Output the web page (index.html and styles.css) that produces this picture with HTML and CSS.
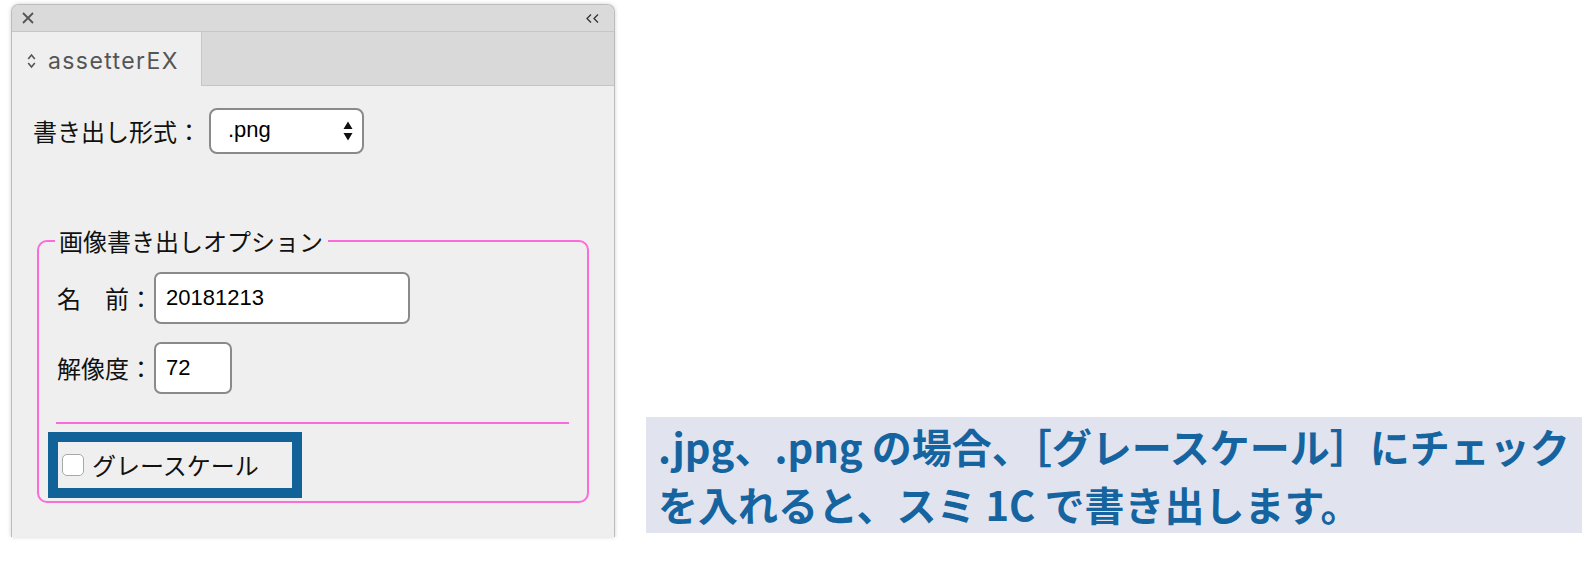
FILE: index.html
```html
<!DOCTYPE html>
<html lang="ja">
<head>
<meta charset="utf-8">
<title>assetterEX</title>
<link rel="stylesheet" href="styles.css">
</head>
<body>
<div class="page">
  <div class="panel">
    <div class="titlebar">
      <svg class="ico-close" width="12" height="12" viewBox="0 0 12 12"><path d="M1 1 L11 11 M11 1 L1 11" stroke="#555" stroke-width="1.8" fill="none"/></svg>
      <svg class="ico-collapse" width="14" height="9" viewBox="0 0 14 9"><path d="M5 0.5 L1 4.5 L5 8.5 M12 0.5 L8 4.5 L12 8.5" stroke="#333" stroke-width="1.3" fill="none"/></svg>
    </div>
    <div class="tabs">
      <div class="tab">
        <svg class="ico-updown" width="9" height="16" viewBox="0 0 9 16"><path d="M1.2 6 L4.5 2 L7.8 6 M1.2 10 L4.5 14 L7.8 10" stroke="#555" stroke-width="1.6" fill="none"/></svg>
        <span class="tab-label">assetterEX</span>
      </div>
      <div class="tab-fill"></div>
    </div>
    <div class="body">
      <div class="format-row">
        <span class="label">書き出し形式：</span>
        <div class="select">
          <span class="select-value">.png</span>
          <svg class="select-arrows" width="10" height="20" viewBox="0 0 10 20"><path d="M0.5 8 L5 0.5 L9.5 8 Z M0.5 12 L9.5 12 L5 19.5 Z" fill="#111"/></svg>
        </div>
      </div>
      <fieldset class="options">
        <legend>画像書き出しオプション</legend>
        <div class="field-row">
          <span class="label">名　前：</span>
          <div class="input wide">20181213</div>
        </div>
        <div class="field-row">
          <span class="label">解像度：</span>
          <div class="input narrow">72</div>
        </div>
        <div class="divider"></div>
        <div class="highlight">
          <span class="checkbox"></span>
          <span class="check-label">グレースケール</span>
        </div>
      </fieldset>
    </div>
  </div>
  <div class="caption">.jpg、.png の場合、［グレースケール］にチェック<br>を入れると、スミ 1C で書き出します。</div>
</div>
</body>
</html>
```
FILE: styles.css
```css
* { box-sizing: border-box; }
html, body { margin: 0; padding: 0; background: #fff; }
body { font-family: "Noto Sans CJK JP", "Noto Sans", sans-serif; color: #111; }

.page {
  display: flex;
  height: 565px;
  width: 1582px;
  overflow: hidden;
}

.panel {
  margin-top: 4px;
  margin-left: 11px;
  width: 604px;
  height: 533px;
  background: #efefef;
  border: 1px solid #bcbcbc;
  border-bottom: none;
  border-radius: 8px 8px 0 0;
  box-shadow: 0 0 4px rgba(0,0,0,0.18);
  overflow: hidden;
  display: flex;
  flex-direction: column;
  flex-shrink: 0;
}

.titlebar {
  height: 27px;
  background: #dadada;
  border-bottom: 1px solid #c6c6c6;
  display: flex;
  align-items: center;
  justify-content: space-between;
  padding: 0 14px 0 10px;
}

.tabs {
  height: 54px;
  display: flex;
}
.tab {
  width: 190px;
  background: #efefef;
  border-right: 1px solid #c6c6c6;
  display: flex;
  align-items: center;
  padding: 3px 0 0 15px;
  gap: 12px;
}
.tab-label {
  font-family: "Inter", "Liberation Sans", sans-serif;
  font-size: 23px;
  color: #555;
  letter-spacing: 1.4px;
}
.tab-fill {
  flex: 1;
  background: #d9d9d9;
  border-bottom: 1px solid #c6c6c6;
}

.body {
  padding: 22px 0 0 21px;
}

.label {
  font-size: 24px;
  line-height: 28px;
  color: #111;
  white-space: nowrap;
}

.format-row {
  display: flex;
  align-items: center;
  gap: 8px;
}
.select {
  width: 155px;
  height: 46px;
  border: 2px solid #8a8a8a;
  border-radius: 8px;
  background: #fff;
  display: flex;
  align-items: center;
  justify-content: space-between;
  padding: 0 9px 0 17px;
}
.select-value {
  font-family: "Liberation Sans", sans-serif;
  font-size: 22px;
  color: #000;
  padding-bottom: 2px;
}

.options {
  margin: 73px 0 0 4px;
  width: 552px;
  border: 2px solid #fb6bd9;
  border-radius: 10px;
  padding: 17px 18px 3px 18px;
  min-width: 0;
}
.options legend {
  font-size: 24px;
  line-height: 28px;
  padding: 0 5px 0 4px;
  margin-left: -2px;
  color: #111;
}

.field-row {
  display: flex;
  align-items: center;
  gap: 1px;
  margin-bottom: 18px;
}
.input {
  height: 52px;
  border: 2px solid #8a8a8a;
  border-radius: 7px;
  background: #fff;
  display: flex;
  align-items: center;
  padding-left: 10px;
  font-family: "Liberation Sans", sans-serif;
  font-size: 22px;
  color: #000;
}
.input.wide { width: 256px; }
.input.narrow { width: 78px; }

.divider {
  height: 2px;
  background: #fb6bd9;
  margin-top: 28px;
  margin-left: -1px;
}

.highlight {
  margin: 8px 0 0 -9px;
  width: 254px;
  height: 66px;
  border: 10px solid #12629a;
  display: flex;
  align-items: center;
  padding-left: 4px;
  gap: 8px;
}
.checkbox {
  width: 22px;
  height: 22px;
  border: 1.5px solid #a8a8a8;
  border-radius: 5px;
  background: #fff;
  flex-shrink: 0;
}
.check-label {
  font-size: 24px;
  line-height: 28px;
  color: #111;
}

.caption {
  align-self: flex-end;
  margin: 0 0 32px 31px;
  flex: 1;
  height: 116px;
  background: #e1e3ef;
  color: #15649f;
  font-family: "Noto Sans CJK JP", "Noto Sans", sans-serif;
  font-weight: 700;
  font-size: 40px;
  line-height: 58px;
  padding: 0 0 0 12px;
  white-space: nowrap;
}
```
